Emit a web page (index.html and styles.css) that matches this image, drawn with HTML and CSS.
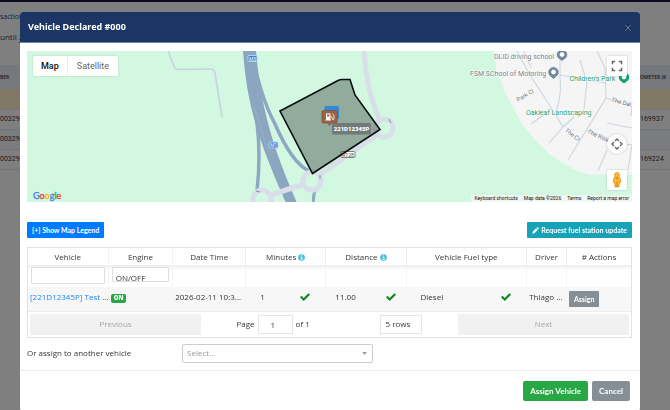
FILE: index.html
```html
<!DOCTYPE html>
<html lang="en">
<head>
<meta charset="utf-8">
<title>Vehicle Declared</title>
<link rel="stylesheet" href="styles.css">
</head>
<body>
<div class="page" aria-hidden="true">
  <div class="topbar"></div>
  <div class="page-crumb">saction</div>
  <div class="page-range">until <span class="dotted">31</span></div>
  <table class="page-table">
    <thead><tr><th>BER</th><th class="col-right">OMETER (K</th></tr></thead>
    <tbody>
      <tr class="warn"><td></td><td></td></tr>
      <tr><td>0032900</td><td>169937</td></tr>
      <tr class="alt"><td>0032900</td><td></td></tr>
      <tr><td>0032900</td><td>169224</td></tr>
    </tbody>
  </table>
</div>

<div class="overlay">
  <section class="modal" role="dialog" aria-labelledby="title">
    <header class="modal-header">
      <h1 id="title">Vehicle Declared #000</h1>
      <button class="close" type="button" aria-label="Close">
        <svg viewBox="0 0 8 8" width="8" height="8"><path d="M1.2 1.2 6.8 6.8M6.8 1.2 1.2 6.8" stroke="#081a3c" stroke-width="1.6"/><path d="M1.2 1.8 6.8 7.4M6.8 1.8 1.2 7.4" stroke="#a9b4c8" stroke-width=".8"/></svg>
      </button>
    </header>

    <div class="modal-body">
      <div class="map">
        <svg class="map-canvas" viewBox="27 51 605 151" preserveAspectRatio="xMidYMid slice">
          <rect x="-400" y="-200" width="1500" height="700" fill="#d3f8e2"/>
          <path d="M494 51 496 68 505 92 522 124 537 142 552 156 573 169 588 174.500H1100V-200H494Z" fill="#f5f5f5"/>
          <path d="M168 51 174 66Q175 69.500 179 69.500L210 69Q214 69 215 73L222 117" fill="none" stroke="#c8d3dc" stroke-width="1.600"/>
          <g fill="none" stroke="#cbd5df" stroke-width="1.100">
            <path d="M517 51 530 75 552 109 563 127 549 143M563 127 574 117M531 124 552 109"/>
            <path d="M524 51 531 68M597 51 605 68 606 98 568 160M606 98 632 107M560 60 560 78Q562 96 556 111M560 75 587 80 606 83M580 60 587 82 584 109M607 123 632 128M607 150 598 171M632 105 631 116M632 145 628 170M587 130 620 143 632 145"/>
          </g>
          <g fill="none" stroke="#8ea7c2">
            <path d="M248 70Q254 104 257 123 261 155 257 191" stroke-width="3.500"/>
            <path d="M252 52Q260 96 275 124 292 163 309 171" stroke-width="3.500"/>
            <path d="M316 188Q313 194 313.500 203" stroke-width="3"/>
          </g>
          <path d="M243 51C247 104 257 137 286 203H297C279 160 262 121 256 51Z" fill="#8ca5c1"/>
          <path d="M254 106 268 151" stroke="#9fb5cd" stroke-width=".7"/>
          <g fill="none" stroke="#d8dfe8">
            <path d="M364 51Q367 94 380 120" stroke-width="5"/>
            <path d="M268 196 304 184M319 175 378 134" stroke-width="5.500"/>
            <circle cx="312" cy="181" r="9" stroke-width="5"/>
            <circle cx="262" cy="199" r="9" stroke-width="5"/>
            <circle cx="384" cy="128" r="9" stroke-width="5"/>
          </g>
          <g fill="none" stroke="#7790ad" stroke-width="1"><path d="M389 119 391 123M320 175V179M256 191 260 192"/></g>
          <g class="shield">
            <rect x="248" y="55.500" width="9" height="6" rx="1"/><text x="252.500" y="60.500">M3</text>
            <rect x="269" y="142" width="9" height="6" rx="1"/><text x="273.500" y="147">M1</text>
          </g>
          <rect x="341" y="151.500" width="14" height="6" rx="1" fill="#f7f8f8" stroke="#5f6b69" stroke-width=".8"/>
          <text class="road-no" x="348" y="156.700">R128</text>
          <path d="M280 111 338 80.500Q340 79.500 342 79.500H350L355 95 380 129.500 312.500 173.500Z" fill="#1c2424" fill-opacity=".36" stroke="#0b0f0f" stroke-width="1.600"/>
          <rect x="324.500" y="106" width="14.500" height="13" rx="1.500" fill="#3288d8"/>
          <path d="M323 110.500H336Q337.200 110.500 337.200 112V122Q337.200 123 336 123H331.500L329.500 125.500 327.500 123H323Q322 123 322 122V112Q322 110.500 323 110.500Z" fill="#9b6244" stroke="#7b4b31" stroke-width=".6"/>
          <path d="M326 113.500H330.500V119.800H331V120.600H325.500V119.800H326ZM327 114.500V116.400H329.500V114.500Z" fill="#fff" fill-rule="evenodd"/>
          <path d="M331 116.500Q332.300 116.500 332.300 118V119.200Q333.200 120.300 334 119.200V115.500L332.500 113.700" fill="none" stroke="#fff" stroke-width=".8"/>
          <rect x="332" y="123" width="39" height="11.500" rx="1.500" fill="#737978"/>
          <text class="plate" x="351.500" y="131.300">221D12345P</text>
          <g class="place">
            <text x="494" y="58.500">DLID driving school</text>
            <text x="470" y="75.500">FSM SChool of Motoring</text>
          </g>
          <g class="park">
            <text x="569.500" y="81">Children's Park</text>
            <text x="526" y="115">Oakleaf Landscaping</text>
          </g>
          <g class="street">
            <text transform="translate(518 102) rotate(-31)">Park Cl</text>
            <text transform="translate(564.500 131) rotate(38)">The Ct</text>
            <text transform="translate(587 133) rotate(24)">The Rise</text>
            <text transform="translate(611 101.500) rotate(15)">The Dal</text>
          </g>
          <g fill="#75899c" stroke="#fff" stroke-width=".8">
            <path d="M562 61.500 557.500 58A5.500 5.500 0 1 1 566.500 58Z"/><circle cx="562" cy="54.500" r="2" fill="#fff"/>
            <path d="M553.500 79.500 549 75.500A5.500 5.500 0 1 1 558 75.500Z"/><circle cx="553.500" cy="72" r="2" fill="#fff"/>
            <path d="M624 84 619.500 80.500A5.500 5.500 0 1 1 628.500 80.500Z" fill="#16a06c"/><circle cx="624" cy="77" r="2" fill="#fff"/>
          </g>
        </svg>
        <div class="map-type">
          <button type="button" class="on">Map</button><button type="button">Satellite</button>
        </div>
        <div class="map-tools">
          <button type="button" class="tool" aria-label="Fullscreen"><svg viewBox="0 0 12 12" width="12" height="12"><path d="M1.500 4.200V1.500H4.200M7.800 1.500H10.500V4.200M10.500 7.800V10.500H7.800M4.200 10.500H1.500V7.800" fill="none" stroke="#666" stroke-width="1.500"/></svg></button>
          <button type="button" class="tool round" aria-label="Camera controls"><svg viewBox="0 0 12 12" width="12" height="12"><path d="M4 3 6 1 8 3M9 4 11 6 9 8M8 9 6 11 4 9M3 8 1 6 3 4" fill="none" stroke="#666" stroke-width="1.400"/></svg></button>
          <button type="button" class="tool" aria-label="Street View"><svg viewBox="0 0 12 16" width="12" height="16"><circle cx="6" cy="3" r="2.500" fill="#fbbc2c" stroke="#d98a1f" stroke-width=".6"/><path d="M3.500 5.500H8.500Q9.800 6 9.800 10.500H8.500L8 15H4L3.500 10.500H2.200Q2.200 6 3.500 5.500Z" fill="#fbb62a" stroke="#d98a1f" stroke-width=".6"/><path d="M6 10V15M4.500 5.800 6 7 7.500 5.800" fill="none" stroke="#c9781b" stroke-width=".8"/></svg></button>
        </div>
        <div class="google"><span class="g-b">G</span><span class="g-r">o</span><span class="g-y">o</span><span class="g-b">g</span><span class="g-g">l</span><span class="g-r">e</span></div>
        <div class="credits"><a href="#">Keyboard shortcuts</a><span>Map data ©2026</span><a href="#">Terms</a><a href="#">Report a map error</a></div>
      </div>

      <div class="toolbar">
        <button type="button" class="btn small primary">[+] Show Map Legend</button>
        <button type="button" class="btn small info"><svg viewBox="0 0 8 8" width="7" height="7"><path d="M.3 7.700.8 5.300 4.700 1.400 6.600 3.300 2.700 7.200ZM5.200.9 5.900.2Q6.200 0 6.500.2L7.800 1.500Q8 1.800 7.800 2.100L7.100 2.800Z" fill="#fff"/></svg>Request fuel station update</button>
      </div>

      <div class="grid">
        <table>
          <colgroup><col class="c-vehicle"><col class="c-engine"><col class="c-date"><col class="c-min"><col class="c-dist"><col class="c-fuel"><col class="c-driver"><col class="c-actions"></colgroup>
          <thead>
            <tr>
              <th>Vehicle</th><th>Engine</th><th>Date Time</th>
              <th>Minutes <svg class="info-dot" viewBox="0 0 8 8"><circle cx="4" cy="4" r="3.800"/><path d="M3 3.500H4.500V6M3 6.100H5.200M3.900 1.500V2.600"/></svg></th>
              <th>Distance <svg class="info-dot" viewBox="0 0 8 8"><circle cx="4" cy="4" r="3.800"/><path d="M3 3.500H4.500V6M3 6.100H5.200M3.900 1.500V2.600"/></svg></th>
              <th>Vehicle Fuel type</th><th>Driver</th><th># Actions</th>
            </tr>
          </thead>
          <tbody>
            <tr class="filters">
              <td><input class="filter" type="text" aria-label="Filter by vehicle"></td>
              <td><div class="engine-filter"><select aria-label="Filter by engine"><option>ON/OFF</option></select></div></td>
              <td></td><td></td><td></td><td></td><td></td><td></td>
            </tr>
            <tr class="entry">
              <td><a href="#">[221D12345P] Test</a> ...</td>
              <td><span class="badge">ON</span></td>
              <td>2026-02-11 10:3...</td>
              <td><div class="checked"><span>1</span><svg class="tick" viewBox="0 0 10 8"><path d="M0 4.300 1.500 2.800 3.700 4.900 8.500.2 10 1.700 3.700 7.900Z"/></svg></div></td>
              <td><div class="checked snug"><span>11.00</span><svg class="tick" viewBox="0 0 10 8"><path d="M0 4.300 1.500 2.800 3.700 4.900 8.500.2 10 1.700 3.700 7.900Z"/></svg></div></td>
              <td><div class="checked"><span>Diesel</span><svg class="tick" viewBox="0 0 10 8"><path d="M0 4.300 1.500 2.800 3.700 4.900 8.500.2 10 1.700 3.700 7.900Z"/></svg></div></td>
              <td>Thiago ...</td>
              <td class="action"><button type="button" class="btn small secondary">Assign</button></td>
            </tr>
          </tbody>
        </table>
        <div class="pager">
          <button type="button" class="page-btn" disabled>Previous</button>
          <div class="pager-mid">
            <label class="page-jump">Page <input type="text" value="1"> of 1</label>
            <select aria-label="Rows per page"><option>5 rows</option></select>
          </div>
          <button type="button" class="page-btn" disabled>Next</button>
        </div>
      </div>

      <div class="assign">
        <label for="other">Or assign to another vehicle</label>
        <div class="combo">
          <select id="other"><option>Select...</option></select>
          <svg viewBox="0 0 6 4" width="5" height="3"><path d="M0 0H6L3 4Z" fill="#999"/></svg>
        </div>
      </div>
    </div>

    <footer class="modal-footer">
      <button type="button" class="btn success">Assign Vehicle</button>
      <button type="button" class="btn secondary">Cancel</button>
    </footer>
  </section>
</div>
</body>
</html>
```

FILE: styles.css
```css
* { box-sizing: border-box; }

body {
  margin: 0;
  overflow: hidden;
  font: 8px/12px "Open Sans", "Noto Sans", sans-serif;
  color: #32373c;
}

button, input, select { font: inherit; color: inherit; margin: 0; }
button { border: 0; padding: 0; background: none; }
a { text-decoration: none; color: inherit; }
svg { flex: none; }

/* page behind the dialog */
.page { height: 100vh; overflow: hidden; background: #fff; }
.topbar { height: 2px; background: #1c1245; }
.page-crumb { margin-top: 9px; height: 12px; font-size: 7px; color: #24406e; }
.page-range { margin-top: 8px; font-size: 8px; white-space: nowrap; }
.dotted { border-bottom: 1px dashed #555; }
.page-table { width: 100%; margin-top: 22px; border-collapse: collapse; table-layout: fixed; font-family: Roboto, sans-serif; font-size: 7px; }
.page-table th { height: 24px; padding: 0; background: #ebf0fb; text-align: left; font: 600 5px "Open Sans", sans-serif; }
.page-table .col-right { width: 30px; white-space: nowrap; overflow: hidden; }
.page-table td { height: 20px; padding: 0; border-bottom: 1px solid #e4e7ee; }
.page-table .warn td { background: #fff3cd; }
.page-table .alt td { background: #f6f8fc; }

.overlay {
  position: fixed;
  inset: 0;
  padding: 12px 30px 0 20px;
  background: rgba(0, 0, 0, 0.5);
  overflow: hidden;
}

.modal { background: #fff; border-radius: 3px; min-height: 100%; overflow: hidden; }

.modal-header {
  display: flex;
  align-items: center;
  justify-content: space-between;
  height: 31px;
  padding: 0 8px;
  background: #1b3564;
  border-bottom: 1px solid #7385a5;
  color: #fff;
}
.modal-header h1 { margin: 0; font: 700 9px/12px "Noto Sans", "Open Sans", sans-serif; }
.close { display: flex; }

.modal-body { padding: 8px 8px 7px 7px; }

/* map */
.map { position: relative; height: 151px; overflow: hidden; font-family: Roboto, sans-serif; }
.map-canvas { display: block; width: 100%; height: 100%; }
.map-canvas text { font-family: Roboto, sans-serif; }
.shield rect { fill: #3d7fd0; stroke: #b9d2ee; stroke-width: 1; }
.shield text { fill: #fff; font-size: 5px; text-anchor: middle; }
.road-no { font-size: 5px; text-anchor: middle; fill: #555; }
.plate { fill: #fff; font-size: 6px; font-weight: 900; text-anchor: middle; }
.place, .park, .street { paint-order: stroke; stroke: #fff; stroke-width: 1px; }
.place { fill: #6b7f92; font-size: 7px; }
.park { fill: #249c6d; font-size: 7px; }
.street { fill: #666d75; font-size: 6px; }

.map-type {
  position: absolute;
  left: 6px;
  top: 5px;
  display: flex;
  height: 20px;
  background: #fff;
  border-radius: 1px;
  box-shadow: 0 0 2px rgba(0, 0, 0, 0.2);
  font-size: 9px;
}
.map-type button { padding: 0 9px; color: #666; }
.map-type .on { padding: 0 8px; font-weight: 500; color: #111; border-right: 1px solid #eee; }

.map-tools { position: absolute; right: 5px; top: 5px; display: flex; flex-direction: column; }
.tool {
  display: flex;
  align-items: center;
  justify-content: center;
  width: 20px;
  height: 20px;
  background: #fff;
  border-radius: 1px;
  box-shadow: 0 0 2px rgba(0, 0, 0, 0.25);
}
.tool.round { margin: 58px 0 16px; border-radius: 50%; }

.google { position: absolute; left: 6px; bottom: 0; font: 500 9px/13px Lato, sans-serif; -webkit-text-stroke: 0.3px; }
.g-b { color: #4285f4; }
.g-r { color: #ea4335; }
.g-y { color: #fbbc05; }
.g-g { color: #34a853; }

.credits {
  position: absolute;
  right: 0;
  bottom: 0;
  display: flex;
  gap: 6px;
  padding: 0 3px;
  background: rgba(245, 245, 245, 0.8);
  font-size: 5px;
  line-height: 7px;
  color: #111;
}

/* buttons */
.btn {
  display: inline-flex;
  align-items: center;
  justify-content: center;
  gap: 2px;
  height: 20px;
  padding: 0 7px;
  border-radius: 2px;
  color: #fff;
  font-family: Lato, "Open Sans", sans-serif;
  font-weight: 700;
  white-space: nowrap;
}
.btn.small { height: 16px; padding: 0 5px; font-size: 7px; border-radius: 1px; }
.primary { background: #007bff; }
.info { background: #17a2b8; }
.success { background: #28a745; }
.secondary { background: #868e96; }

.toolbar { display: flex; justify-content: space-between; margin: 20px 0 9px; }

/* data grid */
.grid { border: 1px solid #e3e3e3; }
.grid table { width: 100%; border-collapse: collapse; table-layout: fixed; }
.c-vehicle { width: 13.3%; }
.c-engine { width: 10.7%; }
.c-date { width: 12.1%; }
.c-min, .c-dist { width: 13.3%; }
.c-fuel { width: 20%; }
.c-driver { width: 6.6%; }
.c-actions { width: 10.7%; }
.grid th { height: 17px; padding: 0; font-weight: 400; border-right: 1px solid #f0f0f0; }
.grid td { padding: 0 3px; border-right: 1px solid #f5f5f5; white-space: nowrap; }
.grid th:last-child, .grid td:last-child { border-right: 0; }
.grid td a { color: #2088ee; }
.filters td { height: 22px; vertical-align: top; padding-top: 2px; background: linear-gradient(#ececec, #fff 5px); }
.entry { background: #f7f7f7; }
.grid .entry td { height: 24px; padding: 0 0 3px 2px; border-bottom: 1px solid #ececec; }
.grid .entry .action { padding-bottom: 0; }
.entry .btn { vertical-align: middle; }
.info-dot { width: 7px; height: 7px; vertical-align: -1px; }
.info-dot circle { fill: #46c0de; }
.info-dot path { fill: none; stroke: #fff; stroke-width: 1; }
.filter { display: block; width: 100%; height: 17px; border: 1px solid #dedede; border-radius: 1px; padding: 0 3px; }
.engine-filter { height: 15px; overflow: hidden; border: 1px solid #dedede; border-radius: 1px; }
.engine-filter select { display: block; appearance: none; width: 100%; height: 19px; border: 0; background: #fff; padding: 0 3px; }
.badge {
  display: inline-block;
  padding: 0 3px;
  border-radius: 2px;
  background: #28a745;
  color: #fff;
  font-size: 6px;
  font-weight: 800;
  line-height: 9px;
}
.checked { display: flex; align-items: center; justify-content: space-between; padding: 0 15px 0 12px; }
.checked.snug { padding: 0 10px 0 7px; }
.tick { width: 10px; height: 8px; fill: #0a8a18; }

.pager { display: flex; align-items: center; height: 25px; padding: 0 2px; }
.page-btn { flex: 1; height: 21px; background: #f1f1f1; color: #a5a5a5; border-radius: 1px; }
.pager-mid { flex: 1.5; display: flex; align-items: center; justify-content: space-around; }
.page-jump { display: flex; align-items: center; gap: 3px; }
.page-jump input { width: 35px; height: 19px; border: 1px solid #e5e5e5; padding: 0 12px; }
.pager select { appearance: none; width: 42px; height: 19px; border: 1px solid #e5e5e5; background: #fff; padding: 0 4px; }

.assign { display: grid; grid-template-columns: 155px 191px; align-items: center; margin-top: 6px; }
.combo { position: relative; }
.combo select {
  display: block;
  appearance: none;
  width: 100%;
  height: 19px;
  border: 1px solid #ccc;
  border-radius: 2px;
  background: #fff;
  color: #999;
  padding: 0 4px;
}
.combo svg { position: absolute; right: 6px; top: 8px; }

.modal-footer {
  display: flex;
  justify-content: flex-end;
  gap: 4px;
  padding: 10px;
  border-top: 1px solid #e9ecf3;
}
```
